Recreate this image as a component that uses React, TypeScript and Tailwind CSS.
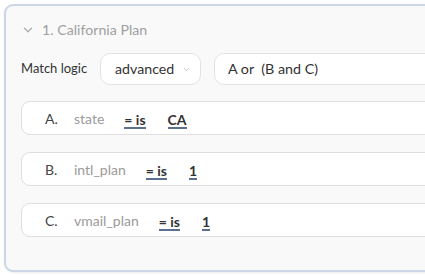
import { ChevronDown } from 'lucide-react';

interface Condition {
  key: string;
  field: string;
  op: string;
  value: string;
}

const conditions: Condition[] = [
  { key: 'A.', field: 'state', op: '= is', value: 'CA' },
  { key: 'B.', field: 'intl_plan', op: '= is', value: '1' },
  { key: 'C.', field: 'vmail_plan', op: '= is', value: '1' },
];

function ConditionRow({ c }: { c: Condition }) {
  return (
    <div className="h-[34px] bg-white border border-[#dedede] rounded-[9px] flex items-center pl-[23px] text-[14px]">
      <span className="w-[29px] text-[#444]">{c.key}</span>
      <span className="text-[#9a9a9a] mr-[20px]">{c.field}</span>
      <span className="font-bold text-[#333] leading-[15px] border-b-2 border-[#5b6f8e] mr-[22px] mt-[4px]">{c.op}</span>
      <span className="font-bold text-[#333] leading-[15px] border-b-2 border-[#5b6f8e] mt-[4px]">{c.value}</span>
    </div>
  );
}

export default function App() {
  return (
    <div className="w-[425px] h-[275px] overflow-hidden bg-white" style={{ fontFamily: 'Lato, "Noto Sans", sans-serif' }}>
      <div className="ml-[4px] mt-[4px] w-[450px] h-[268px] bg-[#f9f9f9] border-2 border-[#cbd7e6] rounded-[9px] shadow-[0_1px_2px_rgba(0,0,0,0.08)] pl-[15px]">
        {/* Header */}
        <div className="mt-[14px] h-[20px] flex items-center text-[14.2px] text-[#a0a0a0]">
          <ChevronDown size={14} strokeWidth={2.5} className="text-[#b0b0b0] mr-[7px]" />
          <span>1. California Plan</span>
        </div>

        {/* Match logic */}
        <div className="mt-[13px] h-[32px] flex items-center">
          <span className="text-[13px] text-[#333] w-[79px]">Match logic</span>
          <div className="h-[32px] w-[101px] bg-white border border-[#e3e3e3] rounded-[10px] flex items-center pl-[14px] pr-[9px] justify-between">
            <span className="text-[14.2px] text-[#333]">advanced</span>
            <ChevronDown size={9} strokeWidth={2} className="text-[#b5b5b5]" />
          </div>
          <div className="ml-[13px] h-[32px] flex-1 bg-white border border-[#e3e3e3] rounded-l-[10px] flex items-center pl-[13px]">
            <span className="text-[14.3px] text-[#333] whitespace-pre">A or  (B and C)</span>
          </div>
        </div>

        {/* Conditions */}
        <div className="mt-[16px] flex flex-col gap-[17px]">
          {conditions.map((c) => (
            <ConditionRow key={c.key} c={c} />
          ))}
        </div>
      </div>
    </div>
  );
}
